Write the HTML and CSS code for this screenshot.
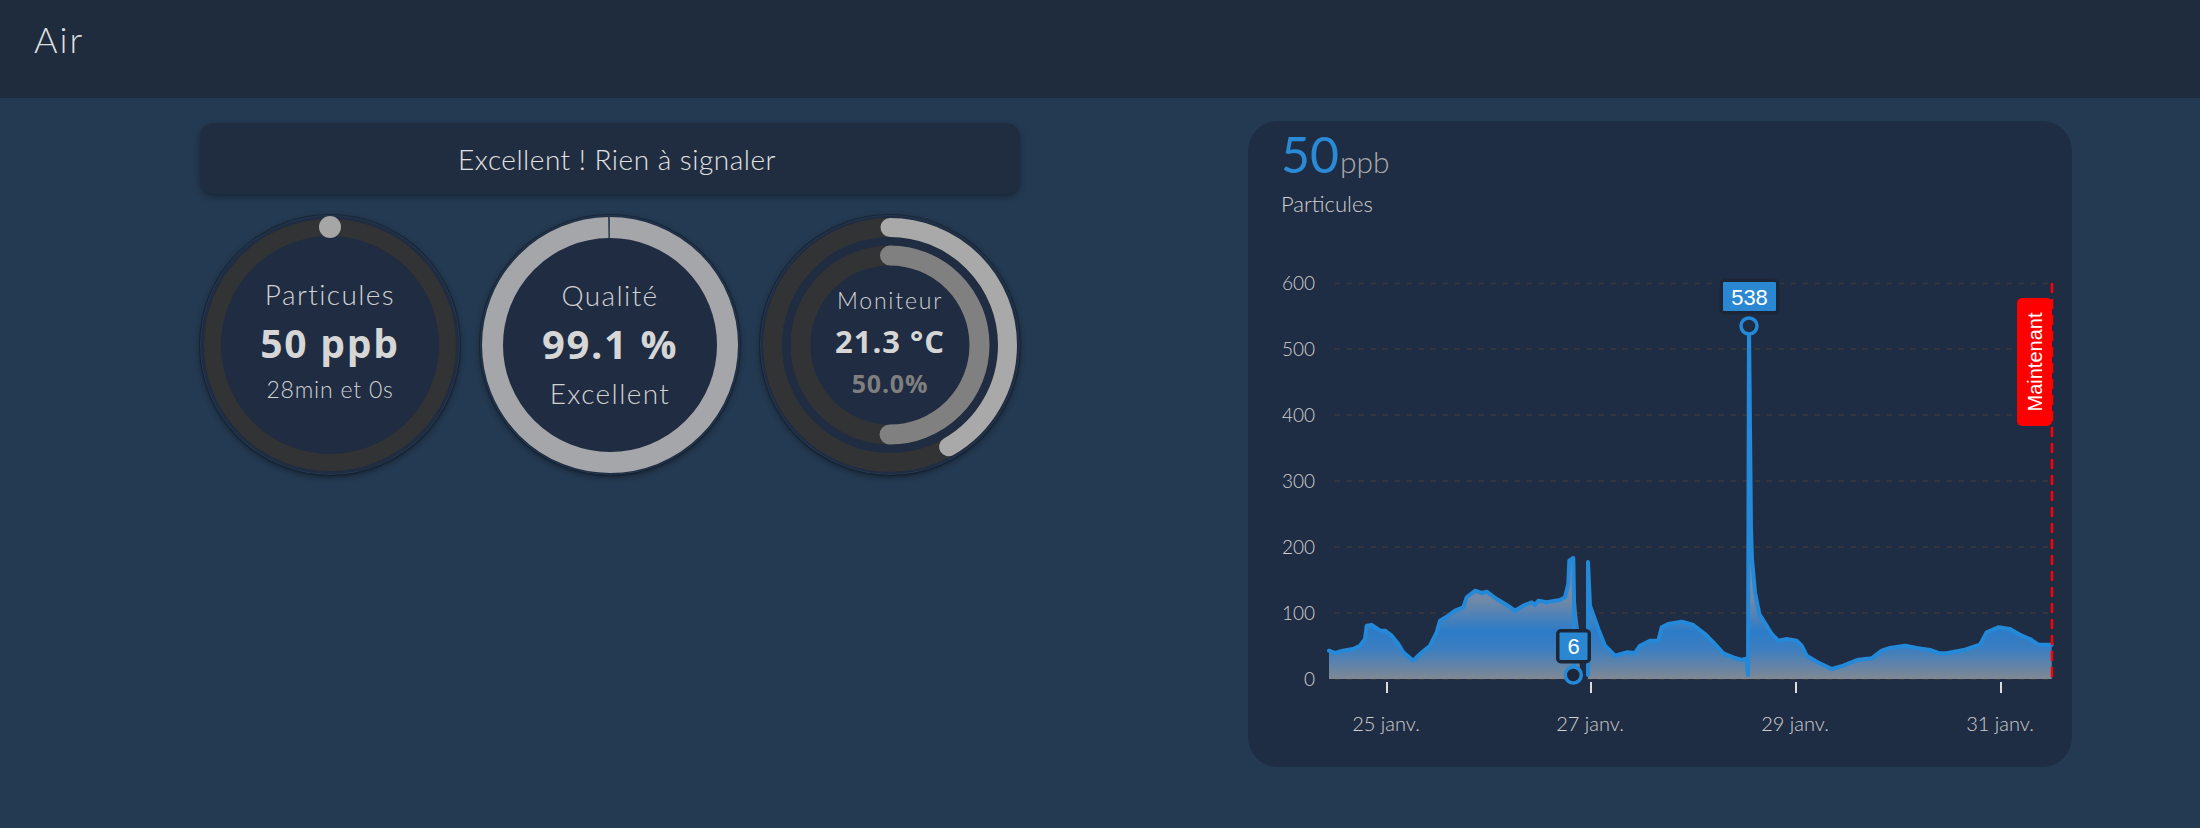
FILE: index.html
```html
<!DOCTYPE html>
<html lang="fr">
<head>
<meta charset="utf-8">
<title>Air</title>
<link rel="stylesheet" href="styles.css">
</head>
<body>
<header class="topbar"><h1 class="title">Air</h1></header>
<main class="content">
  <section class="left">
    <div class="status">Excellent ! Rien à signaler</div>
    <div class="gauges">
      <div class="gauge">
        <svg class="ring" viewBox="0 0 260 260" width="260" height="260">
          <circle cx="130" cy="130" r="129" fill="#1f2c42"/>
          <circle cx="130" cy="130" r="117.5" fill="none" stroke="#323334" stroke-width="17"/>
          <circle cx="130" cy="12" r="11" fill="#a6a6a7"/>
        </svg>
        <div class="gtext g1">
          <div class="glabel">Particules</div>
          <div class="gvalue">50 ppb</div>
          <div class="gsub">28min et 0s</div>
        </div>
      </div>
      <div class="gauge">
        <svg class="ring" viewBox="0 0 260 260" width="260" height="260">
          <circle cx="130" cy="130" r="129" fill="#1f2c42"/>
          <circle cx="130" cy="130" r="117.5" fill="none" stroke="#a5a6a9" stroke-width="21" stroke-dasharray="736.5 1.8" transform="rotate(-90.1 130 130)"/>
        </svg>
        <div class="gtext g2">
          <div class="glabel">Qualité</div>
          <div class="gvalue big">99.1 %</div>
          <div class="glabel">Excellent</div>
        </div>
      </div>
      <div class="gauge">
        <svg class="ring" viewBox="0 0 260 260" width="260" height="260">
          <circle cx="130" cy="130" r="129" fill="#1f2c42"/>
          <circle cx="130" cy="130" r="117.5" fill="none" stroke="#323334" stroke-width="19"/>
          <circle cx="130" cy="130" r="117.5" fill="none" stroke="#a9a9aa" stroke-width="19" stroke-linecap="round" stroke-dasharray="307.6 1000" transform="rotate(-90 130 130)"/>
          <circle cx="130" cy="130" r="89.5" fill="none" stroke="#323334" stroke-width="20"/>
          <circle cx="130" cy="130" r="89.5" fill="none" stroke="#808081" stroke-width="20" stroke-linecap="round" stroke-dasharray="281.2 1000" transform="rotate(-90 130 130)"/>
        </svg>
        <div class="gtext g3">
          <div class="glabel small">Moniteur</div>
          <div class="gvalue mid">21.3 °C</div>
          <div class="gvalue dim">50.0%</div>
        </div>
      </div>
    </div>
  </section>
  <section class="card">
    <div class="card-head">
      <div class="reading"><span class="num">50</span><span class="unit">ppb</span></div>
      <div class="metric">Particules</div>
    </div>
    <svg class="chart" viewBox="1248 250 824 518" width="824" height="518">
      <defs>
        <linearGradient id="fillg" gradientUnits="userSpaceOnUse" x1="0" y1="555" x2="0" y2="680">
          <stop offset="0" stop-color="#8593a4"/>
          <stop offset="0.38" stop-color="#6e88a8"/>
          <stop offset="0.62" stop-color="#2c7bc8"/>
          <stop offset="0.76" stop-color="#3c7ec0"/>
          <stop offset="1" stop-color="#808894"/>
        </linearGradient>
      </defs>
      <g class="grid">
        <line x1="1335" y1="680" x2="2052" y2="680"/>
        <line x1="1335" y1="614" x2="2052" y2="614"/>
        <line x1="1335" y1="548" x2="2052" y2="548"/>
        <line x1="1335" y1="482" x2="2052" y2="482"/>
        <line x1="1335" y1="416" x2="2052" y2="416"/>
        <line x1="1335" y1="350" x2="2052" y2="350"/>
        <line x1="1335" y1="284.5" x2="2052" y2="284.5"/>
      </g>
      <g class="ylab">
        <text x="1315" y="687">0</text>
        <text x="1315" y="621">100</text>
        <text x="1315" y="555">200</text>
        <text x="1315" y="489">300</text>
        <text x="1315" y="423">400</text>
        <text x="1315" y="357">500</text>
        <text x="1315" y="291">600</text>
      </g>
      <path class="area" d="M1329,651.7 L1335,654 L1343,651.7 L1353,650 L1360,646.7 L1365,640 L1366.7,626.7 L1371.7,626 L1380,631.7 L1385,631.7 L1391.7,636.7 L1398.3,645 L1403.3,653.3 L1413.3,661.7 L1420,655 L1430,646.7 L1436.7,633.3 L1440,621.7 L1448.3,616.7 L1455,611.7 L1463.3,608.3 L1466.7,598.3 L1475,591.7 L1481.7,594 L1486.7,592.7 L1496.7,600 L1506.7,606 L1515,611.7 L1523.3,606.7 L1531.7,603.3 L1535,606 L1538.3,601.7 L1546.7,603.3 L1560,601 L1565,598.3 L1568.3,585 L1569.3,561.7 L1573.3,559 L1575,590 L1577,615 L1579,630 L1580,680 L1329,680 Z"/>
      <path class="area" d="M1588,676 L1588,563 L1590,606.7 L1598.3,630 L1605,646.7 L1615,656.7 L1626.7,653.3 L1635,654 L1640,646.7 L1650,641.7 L1658.3,641.7 L1661.7,628.3 L1668.3,625 L1681.7,622.7 L1693.3,626 L1705,635 L1713.3,643.3 L1723.3,654.3 L1733.3,658.3 L1741.7,661 L1746.7,659.3 L1748,676 L1749,325 L1750,430 L1751,530 L1752,560 L1755,593.3 L1759.3,615 L1766.7,626.7 L1771.7,635 L1778.3,641.7 L1786.7,640 L1796.7,641.7 L1801.7,646.7 L1806.7,656.7 L1816.7,662.7 L1831.7,670 L1843.3,666.7 L1858.3,660.7 L1871.7,659.3 L1881.7,651.7 L1890,649 L1905,646.7 L1916.7,649 L1930,651 L1938.3,654 L1946.7,654.3 L1965,650.7 L1980,645.7 L1986.7,633.3 L1998.3,628.3 L2010,630 L2021.7,636.7 L2030,640 L2038.3,645.7 L2051.7,645.7 L2051.7,680 L1588,680 Z"/>
      <path class="line" d="M1329,651.7 L1335,654 L1343,651.7 L1353,650 L1360,646.7 L1365,640 L1366.7,626.7 L1371.7,626 L1380,631.7 L1385,631.7 L1391.7,636.7 L1398.3,645 L1403.3,653.3 L1413.3,661.7 L1420,655 L1430,646.7 L1436.7,633.3 L1440,621.7 L1448.3,616.7 L1455,611.7 L1463.3,608.3 L1466.7,598.3 L1475,591.7 L1481.7,594 L1486.7,592.7 L1496.7,600 L1506.7,606 L1515,611.7 L1523.3,606.7 L1531.7,603.3 L1535,606 L1538.3,601.7 L1546.7,603.3 L1560,601 L1565,598.3 L1568.3,585 L1569.3,561.7 L1573.3,559 L1574,600 L1574,676"/>
      <path class="line" d="M1588,676 L1588,563 L1590,606.7 L1598.3,630 L1605,646.7 L1615,656.7 L1626.7,653.3 L1635,654 L1640,646.7 L1650,641.7 L1658.3,641.7 L1661.7,628.3 L1668.3,625 L1681.7,622.7 L1693.3,626 L1705,635 L1713.3,643.3 L1723.3,654.3 L1733.3,658.3 L1741.7,661 L1746.7,659.3 L1748,676 L1749,325 L1750,430 L1751,530 L1752,560 L1755,593.3 L1759.3,615 L1766.7,626.7 L1771.7,635 L1778.3,641.7 L1786.7,640 L1796.7,641.7 L1801.7,646.7 L1806.7,656.7 L1816.7,662.7 L1831.7,670 L1843.3,666.7 L1858.3,660.7 L1871.7,659.3 L1881.7,651.7 L1890,649 L1905,646.7 L1916.7,649 L1930,651 L1938.3,654 L1946.7,654.3 L1965,650.7 L1980,645.7 L1986.7,633.3 L1998.3,628.3 L2010,630 L2021.7,636.7 L2030,640 L2038.3,645.7 L2051.7,645.7"/>
      <g class="ticks">
        <line x1="1387" y1="683" x2="1387" y2="694"/>
        <line x1="1591" y1="683" x2="1591" y2="694"/>
        <line x1="1796" y1="683" x2="1796" y2="694"/>
        <line x1="2001" y1="683" x2="2001" y2="694"/>
      </g>
      <g class="xlab">
        <text x="1386" y="732">25 janv.</text>
        <text x="1590" y="732">27 janv.</text>
        <text x="1795" y="732">29 janv.</text>
        <text x="2000" y="732">31 janv.</text>
      </g>
      <line class="now" x1="2052" y1="284" x2="2052" y2="680"/>
      <rect class="now-tag" x="2017" y="299" width="35" height="128" rx="5"/>
      <text class="now-text" transform="translate(2041.5 363) rotate(-90)">Maintenant</text>
      <circle class="marker" cx="1749" cy="327" r="8"/>
      <rect class="tip-border" x="1719.5" y="279.5" width="60" height="36" rx="5"/>
      <rect class="tip" x="1723" y="283" width="53" height="29" rx="1"/>
      <text class="tip-text" x="1749.5" y="306">538</text>
      <circle class="marker dark" cx="1573.3" cy="676" r="8"/>
      <rect class="tip-border" x="1556" y="630" width="35" height="34.5" rx="5"/>
      <rect class="tip" x="1559.5" y="633.5" width="28" height="27.5" rx="1"/>
      <text class="tip-text" x="1573.5" y="655">6</text>
    </svg>
  </section>
</main>
</body>
</html>
```
FILE: styles.css
```css
html, body {
  margin: 0;
  padding: 0;
}
body {
  width: 2200px;
  height: 828px;
  overflow: hidden;
  background: #243a52;
  font-family: Lato, "Open Sans", "DejaVu Sans", sans-serif;
  color: #d4d4d4;
}
.topbar {
  height: 98px;
  box-sizing: border-box;
  background: #1f2c3e;
  padding: 18px 0 0 34px;
}
.title {
  margin: 0;
  font-size: 36px;
  font-weight: 300;
  line-height: 43px;
  letter-spacing: 2px;
  color: #dedede;
}
.content {
  display: flex;
  align-items: flex-start;
  padding: 24px 0 0 200px;
  gap: 228px;
}
.left {
  width: 820px;
  display: flex;
  flex-direction: column;
  gap: 21px;
  padding-top: 1px;
}
.status {
  height: 71px;
  box-sizing: border-box;
  padding-left: 14px;
  border-radius: 14px;
  background: #202d40;
  box-shadow: 0 3px 6px rgba(0, 0, 0, 0.35);
  display: flex;
  align-items: center;
  justify-content: center;
  font-size: 28px;
  font-weight: 300;
  letter-spacing: 0.5px;
  color: #e2e2e2;
}
.gauges {
  display: flex;
  gap: 20px;
}
.gauge {
  width: 260px;
  height: 260px;
  display: grid;
  border-radius: 50%;
  box-shadow: 0 0 0 1px rgba(22, 32, 46, 0.7), 0 2px 6px rgba(0, 0, 0, 0.45);
}
.gauge > * {
  grid-area: 1 / 1;
}
.ring {
  display: block;
}
.gtext {
  display: flex;
  flex-direction: column;
  align-items: center;
  justify-content: center;
  text-align: center;
  box-sizing: border-box;
}
.glabel {
  font-size: 28px;
  font-weight: 300;
  line-height: 50px;
  letter-spacing: 1.4px;
  color: #d2d2d2;
}
.gvalue {
  font-family: "Open Sans", Lato, sans-serif;
  font-size: 39px;
  font-weight: 700;
  line-height: 48px;
  letter-spacing: 1.8px;
  color: #d6d6d6;
}
.gsub {
  font-size: 23px;
  font-weight: 300;
  line-height: 44px;
  letter-spacing: 0.8px;
  color: #d2d2d2;
}
.g1 {
  padding-bottom: 10px;
}
.g2 .gvalue.big {
  font-size: 40px;
  line-height: 48px;
  letter-spacing: 1.6px;
}
.g2 {
  padding-bottom: 2px;
}
.g3 .glabel.small {
  font-size: 23px;
  line-height: 40px;
  letter-spacing: 1.8px;
}
.g3 .gvalue.mid {
  font-size: 31px;
  line-height: 42px;
  letter-spacing: 1px;
}
.g3 .gvalue.dim {
  font-size: 25px;
  line-height: 42px;
  letter-spacing: 0.8px;
  color: #7f7f80;
}
.g3 {
  padding-bottom: 6px;
}
.card {
  width: 824px;
  height: 646px;
  margin-top: -1px;
  border-radius: 30px;
  background: #1f2d44;
  overflow: hidden;
}
.card-head {
  height: 128px;
  box-sizing: border-box;
  padding: 5px 0 0 33px;
}
.reading {
  line-height: 56px;
  white-space: nowrap;
}
.num {
  font-size: 50px;
  font-weight: 400;
  color: #2a8ad6;
}
.unit {
  font-size: 30px;
  font-weight: 300;
  color: #a9a9a9;
  margin-left: 1px;
}
.metric {
  margin-top: -6px;
  font-size: 22px;
  font-weight: 300;
  line-height: 30px;
  color: #d0d0d0;
}
.chart {
  display: block;
}
.grid line {
  stroke: #33373c;
  stroke-width: 1.8;
  stroke-dasharray: 5 7;
}
.ylab text {
  font-family: Lato, "Open Sans", sans-serif;
  font-size: 19px;
  font-weight: 300;
  fill: #cfcfcf;
  text-anchor: end;
}
.xlab text {
  font-family: Lato, "Open Sans", sans-serif;
  font-size: 20px;
  font-weight: 300;
  fill: #cfcfcf;
  text-anchor: middle;
}
.area {
  fill: url(#fillg);
}
.line {
  fill: none;
  stroke: #2389d8;
  stroke-width: 4;
  stroke-linejoin: round;
  stroke-linecap: round;
}
.ticks line {
  stroke: #dcdcdc;
  stroke-width: 2;
}
.now {
  stroke: #ff0000;
  stroke-width: 2.5;
  stroke-dasharray: 10 6;
}
.now-tag {
  fill: #ff0000;
}
.now-text {
  font-family: "Liberation Sans", Arial, sans-serif;
  font-size: 20px;
  fill: #ffffff;
  text-anchor: middle;
}
.marker {
  fill: #1f2d44;
  stroke: #2389d8;
  stroke-width: 3.5;
}
.marker.dark {
  fill: #1c2636;
}
.tip-border {
  fill: #1c2636;
}
.tip {
  fill: #2a87d2;
}
.tip-text {
  font-family: "Liberation Sans", Arial, sans-serif;
  font-size: 22px;
  fill: #ffffff;
  text-anchor: middle;
}
```
